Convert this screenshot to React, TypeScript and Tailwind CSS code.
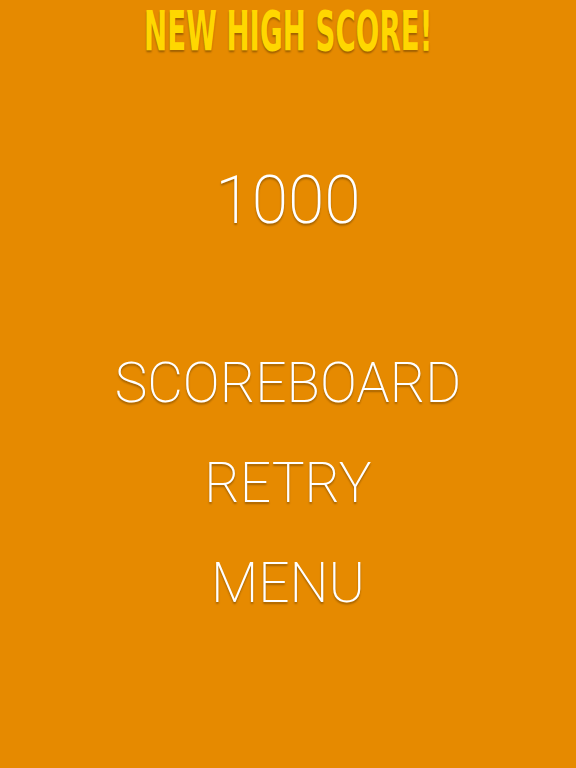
export default function App() {
  const shadow = '[text-shadow:0_2px_2px_rgba(0,0,0,0.3)]';
  return (
    <div className="w-[576px] h-[768px] bg-[#e68a00] flex flex-col items-center overflow-hidden font-['Roboto',sans-serif]">
      <h1
        className={`mt-[6px] text-[#ffd700] text-[46px] leading-[50px] font-bold uppercase whitespace-nowrap font-['DejaVu_Sans_Condensed',sans-serif] ${shadow} [transform:scale(0.67,1.18)]`}
      >
        NEW HIGH SCORE!
      </h1>
      <div className={`mt-[105px] text-white text-[66px] leading-[80px] font-extralight ${shadow}`}>1000</div>
      <div className="mt-[92px] flex flex-col items-center text-white text-[55px] leading-[100px] font-extralight">
        <button className={shadow}>SCOREBOARD</button>
        <button className={shadow}>RETRY</button>
        <button className={shadow}>MENU</button>
      </div>
    </div>
  );
}
